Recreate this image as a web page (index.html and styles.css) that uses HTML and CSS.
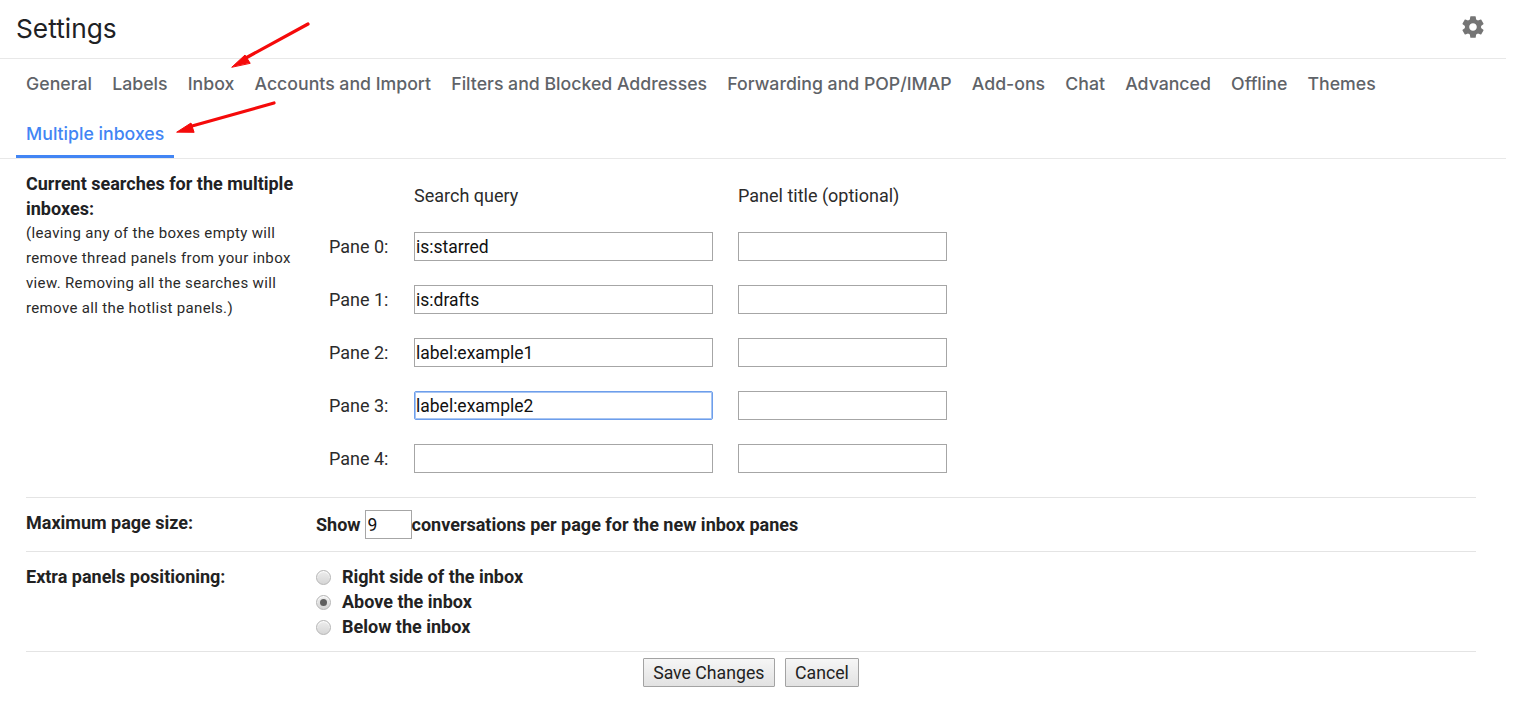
FILE: index.html
```html
<!DOCTYPE html>
<html lang="en">
<head>
<meta charset="utf-8">
<title>Settings</title>
<link rel="stylesheet" href="styles.css">
</head>
<body>
<div class="page">
  <header class="header">
    <h1 class="title">Settings</h1>
    <svg class="gear" viewBox="0 0 24 24" width="26" height="26"><path fill="#757575" d="M19.43 12.98c.04-.32.07-.64.07-.98s-.03-.66-.07-.98l2.11-1.65c.19-.15.24-.42.12-.64l-2-3.46c-.12-.22-.39-.3-.61-.22l-2.49 1c-.52-.4-1.08-.73-1.69-.98l-.38-2.65C14.46 2.18 14.25 2 14 2h-4c-.25 0-.46.18-.49.42l-.38 2.65c-.61.25-1.17.59-1.69.98l-2.49-1c-.23-.09-.49 0-.61.22l-2 3.46c-.13.22-.07.49.12.64l2.11 1.65c-.04.32-.07.65-.07.98s.03.66.07.98l-2.11 1.65c-.19.15-.24.42-.12.64l2 3.46c.12.22.39.3.61.22l2.49-1c.52.4 1.08.73 1.69.98l.38 2.65c.03.24.24.42.49.42h4c.25 0 .46-.18.49-.42l.38-2.65c.61-.25 1.17-.59 1.69-.98l2.49 1c.23.09.49 0 .61-.22l2-3.46c.12-.22.07-.49-.12-.64l-2.11-1.65zM12 15.5c-1.93 0-3.5-1.57-3.5-3.5s1.57-3.5 3.5-3.5 3.5 1.57 3.5 3.5-1.57 3.5-3.5 3.5z"/></svg>
  </header>
  <nav class="tabs">
    <a class="tab">General</a>
    <a class="tab">Labels</a>
    <a class="tab">Inbox</a>
    <a class="tab">Accounts and Import</a>
    <a class="tab">Filters and Blocked Addresses</a>
    <a class="tab">Forwarding and POP/IMAP</a>
    <a class="tab">Add-ons</a>
    <a class="tab">Chat</a>
    <a class="tab">Advanced</a>
    <a class="tab">Offline</a>
    <a class="tab">Themes</a>
    <a class="tab tab-active">Multiple inboxes</a>
  </nav>
  <main class="content">
    <section class="section section-searches">
      <div class="intro">
        <strong class="intro-title">Current searches for the multiple inboxes:</strong>
        <p class="intro-note">(leaving any of the boxes empty will remove thread panels from your inbox view. Removing all the searches will remove all the hotlist panels.)</p>
      </div>
      <div class="panes">
        <span></span><span class="col-head">Search query</span><span class="col-head col-title">Panel title (optional)</span>
        <label class="pane-label">Pane 0:</label><input class="field field-query" value="is:starred"><input class="field field-title">
        <label class="pane-label">Pane 1:</label><input class="field field-query" value="is:drafts"><input class="field field-title">
        <label class="pane-label">Pane 2:</label><input class="field field-query" value="label:example1"><input class="field field-title">
        <label class="pane-label">Pane 3:</label><input class="field field-query field-focus" value="label:example2"><input class="field field-title">
        <label class="pane-label">Pane 4:</label><input class="field field-query"><input class="field field-title">
      </div>
    </section>
    <section class="section section-size">
      <div class="row-label">Maximum page size:</div>
      <div class="size-line"><span>Show</span><input class="field field-size" value="9"><span>conversations per page for the new inbox panes</span></div>
    </section>
    <section class="section section-position">
      <div class="row-label">Extra panels positioning:</div>
      <div class="radios">
        <label class="radio-row"><span class="radio"></span>Right side of the inbox</label>
        <label class="radio-row"><span class="radio radio-on"></span>Above the inbox</label>
        <label class="radio-row"><span class="radio"></span>Below the inbox</label>
      </div>
    </section>
    <div class="actions">
      <button class="btn">Save Changes</button>
      <button class="btn">Cancel</button>
    </div>
  </main>
  <svg class="arrows" width="1521" height="722" viewBox="0 0 1521 722">
    <g fill="#f50a0a" stroke="#f50a0a" stroke-linecap="round" stroke-linejoin="round">
      <path d="M308 24 L244 59" stroke-width="3.2" fill="none"/>
      <path d="M232 67 L245 55 L250 63 Z" stroke-width="1"/>
      <path d="M274 103 L192 126" stroke-width="3.2" fill="none"/>
      <path d="M177 132 L191 123 L194 132 Z" stroke-width="1"/>
    </g>
  </svg>
</div>
</body>
</html>
```
FILE: styles.css
```css
* { box-sizing: border-box; }
html, body { margin: 0; padding: 0; background: #fff; }
body { font-family: Roboto, "Liberation Sans", sans-serif; color: #202124; overflow: hidden; }
.page { position: relative; width: 1521px; height: 722px; }
.header {
  width: 1506px; height: 59px; border-bottom: 1px solid #e8e8e8;
  display: flex; align-items: flex-start; justify-content: space-between;
  padding: 12px 20px 0 16px;
}
.title { margin: 0; font-family: Inter, Roboto, sans-serif; font-size: 26.3px; line-height: 34px; font-weight: 400; color: #202124; }
.gear { margin-top: 2px; }
.tabs {
  width: 1506px; height: 100px; padding: 0 120px 0 16px; border-bottom: 1px solid #e8e8e8;
  display: flex; flex-wrap: wrap; align-content: flex-start;
}
.tab {
  height: 50px; padding: 0 10.1px; line-height: 50px;
  font-family: Inter, Roboto, sans-serif; font-size: 17.7px; font-weight: 500; color: #5f6368; white-space: nowrap;
}
.tab-active { color: #4285f4; border-bottom: 3px solid #4285f4; height: 49px; }
.content { width: 1476px; padding-left: 26px; }
.section { display: grid; grid-template-columns: 290px 1fr; border-bottom: 1px solid #e4e4e4; }
.section-searches { height: 339px; padding-top: 12px; }
.intro { width: 280px; font-size: 15px; line-height: 25px; letter-spacing: .35px; }
.intro-title { display: block; font-size: 18px; font-weight: 700; letter-spacing: 0; }
.intro-note { margin: 0; color: #2a2a2a; }
.panes {
  display: grid; grid-template-columns: 85px 299px 234px;
  grid-template-rows: 49px repeat(5, 53px); align-items: center; padding-left: 13px;
}
.panes > :nth-child(3n) { margin-left: 25px; width: 209px; }
.col-head { font-size: 18px; color: #2b2b2b; }
.pane-label { font-size: 18px; color: #2b2b2b; }
.field {
  height: 29px; border: 1px solid #a6a6a6; border-radius: 0; outline: 0; background: #fff;
  font-family: Roboto, "Liberation Sans", sans-serif; font-size: 17.5px; color: #111; padding: 0 1px; margin: 0;
}
.field-query { width: 299px; }
.field-focus { border-color: #6d9eeb; box-shadow: 0 0 0 1px rgba(109, 158, 235, .6) inset; border-radius: 2px; }
.section-size { height: 54px; align-items: center; }
.row-label { font-size: 18px; font-weight: 700; color: #222; }
.section-size .row-label { margin-top: -5px; }
.section-position .row-label { margin-top: 2px; }
.size-line { display: flex; align-items: center; font-size: 18px; font-weight: 700; color: #222; }
.field-size { width: 47px; font-weight: 400; margin-left: 4px; padding: 0 2px; }
.section-position { height: 100px; padding-top: 12px; }
.radios { display: flex; flex-direction: column; }
.radio-row { display: flex; align-items: center; height: 25px; font-size: 18px; font-weight: 700; color: #222; }
.radio {
  width: 15px; height: 15px; border-radius: 50%; margin: 1px 11px 0 0; flex: none;
  border: 1px solid #b5b5b5; background: linear-gradient(#ededed, #d6d6d6);
  box-shadow: inset 0 1px 1px #fff;
  display: flex; align-items: center; justify-content: center;
}
.radio-on::after { content: ""; width: 7px; height: 7px; border-radius: 50%; background: #5f5f5f; }
.actions { display: flex; justify-content: center; gap: 10px; padding: 6px 0 0 0; }
.btn {
  height: 29px; padding: 0 9.3px; border: 1px solid #a3a3a3; border-radius: 1px;
  background: linear-gradient(#f6f6f6, #e2e2e2);
  font-family: Roboto, "Liberation Sans", sans-serif; font-size: 17.7px; color: #222;
}
.arrows { position: absolute; left: 0; top: 0; pointer-events: none; }
```
